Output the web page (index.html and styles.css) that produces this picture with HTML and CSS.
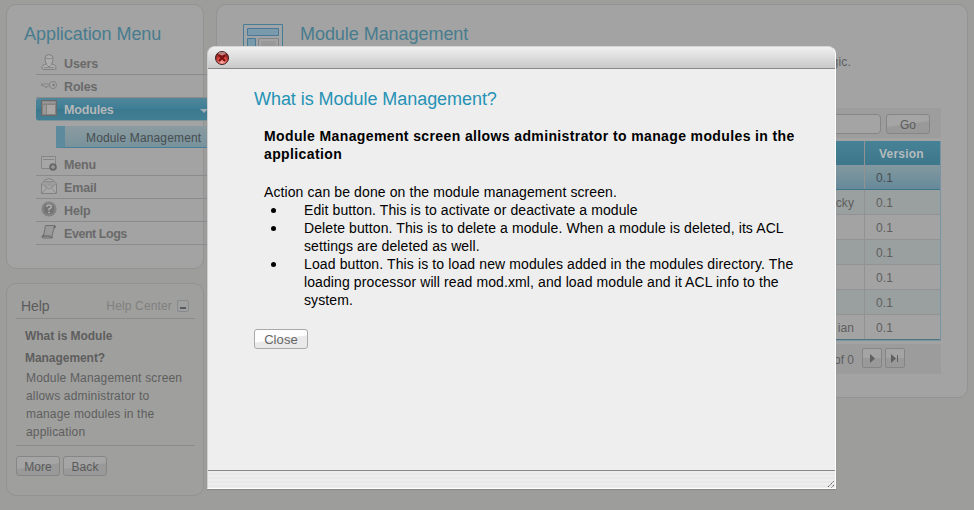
FILE: index.html
```
<!DOCTYPE html>
<html lang="en">
<head>
<meta charset="utf-8">
<title>Module Management</title>
<link rel="stylesheet" href="styles.css">
</head>
<body>
<div class="page">
  <aside class="sidebar">
    <section class="panel menu">
      <h2 class="title">Application Menu</h2>
      <ul class="nav">
        <li class="row"><svg viewBox="0 0 16 16"><path d="M2.500 15.400q-1.500 0-1.500-1.500 0-3.200 4.500-3.900Q3.800 8 4 4 4.200.6 8 .6T12 4q.2 4-1.500 6 4.500.7 4.500 3.900 0 1.500-1.500 1.500z" fill="#adadad" stroke="#7d7d7d"/><path d="M4.500 4q3.500 1.800 7 0M5.500 10.500 8 13l2.500-2.500M3 13.500h10" fill="none" stroke="#888"/></svg><span>Users</span></li>
        <li class="row"><svg viewBox="0 0 16 16"><path d="M.5 7h9v2H6l-1 2-1-2-3.500-.5z" fill="#aaa" stroke="#7b7b7b" stroke-width=".8"/><circle cx="12" cy="8" r="3.500" fill="#a8a8a8" stroke="#808080"/><circle cx="12.500" cy="8" r="1.200" fill="#777"/></svg><span>Roles</span></li>
        <li class="row active"><svg viewBox="0 0 16 16"><path d="M.5.5h15v15H.5z" fill="#858381" stroke="#696969"/><path d="M1.500 1.500h13v2h-13z" fill="#969696"/><path d="M2 5h3v9H2z" fill="#999"/><path d="M6 5h8v9H6z" fill="#a9a6a4"/></svg><span>Modules</span><i class="arrow"></i></li>
        <li class="sub"><span>Module Management</span></li>
        <li class="row"><svg viewBox="0 0 16 16"><path d="M.5 1.500h14v12H.5z" fill="#a6a6a6" stroke="#858585"/><path d="M2 4.500h11" stroke="#858585"/><circle cx="12" cy="12" r="3.800" fill="#696969"/><path d="M10 12h4M12 10v4" stroke="#aaa"/></svg><span>Menu</span></li>
        <li class="row"><svg viewBox="0 0 16 16"><path d="M.5 6 4 2q4-3 8 0l3.500 4v9.500H.5z" fill="#a8a8a8" stroke="#828282"/><path d="M4 3.500h8V8L8 11 4 8zM1 6l5 4-5 5M15 6l-5 4 5 5M5.500 5h5M5.500 7h5" fill="none" stroke="#8b8b8b"/></svg><span>Email</span></li>
        <li class="row"><svg viewBox="0 0 16 16"><circle cx="8" cy="8" r="7" fill="#737373" stroke="#808080"/><circle cx="8" cy="8" r="5.900" fill="none" stroke="#959595" stroke-width=".7"/><path d="M5.800 6q0-2 2.300-2t2.200 1.900Q10.200 7.200 8 8v1.500" fill="none" stroke="#b0b0b0" stroke-width="1.500"/><path d="M7.200 10.700H9v1.600H7.200z" fill="#b0b0b0"/></svg><span>Help</span></li>
        <li class="row"><svg viewBox="0 0 16 16"><path d="M4.500 1.500h9q1.500 0 1 2l-1.500.5-2 8 .5 2H2q-1.500 0-1-2h1.500z" fill="#999" stroke="#707070"/><path d="M1 12h8l1.500 2M13 4l.5-2.500" fill="none" stroke="#5f5f5f"/></svg><span class="tight">Event Logs</span></li>
      </ul>
    </section>
    <section class="panel help">
      <header class="help-head"><span class="help-name">Help</span><span class="center-link">Help Center</span><i class="collapse"></i></header>
      <h3>What is Module<br>Management?</h3>
      <p>Module Management screen<br>allows administrator to<br>manage modules in the<br>application</p>
      <footer><span class="btn dim">More</span><span class="btn dim">Back</span></footer>
    </section>
  </aside>
  <main class="panel content">
    <header class="content-head">
      <svg class="big" viewBox="0 0 40 40"><path d="M.5.5h39v39H.5z" fill="#9ea4a8" stroke="#477c93"/><path d="M4.500 4.500h31v7h-31zM4.500 14.500h8v21h-8z" fill="#789aab" stroke="#4b7995"/><path d="M15.500 14.500h20v21h-20z" fill="#a3a3a3" stroke="#858585"/><path d="M18 17h15v16H18z" fill="#999"/></svg>
      <h2 class="title">Module Management</h2>
    </header>
    <p class="desc">gic.</p>
    <div class="search"><span class="field"></span><span class="btn dim go">Go</span></div>
    <div class="grid">
      <div class="tr th"><span></span><span>Version</span></div>
      <div class="tr sel"><span></span><span>0.1</span></div>
      <div class="tr alt"><span>cky</span><span>0.1</span></div>
      <div class="tr"><span></span><span>0.1</span></div>
      <div class="tr alt"><span></span><span>0.1</span></div>
      <div class="tr"><span></span><span>0.1</span></div>
      <div class="tr alt"><span></span><span>0.1</span></div>
      <div class="tr"><span>ian</span><span>0.1</span></div>
    </div>
    <div class="pager"><span class="of">of 0</span><span class="pg"><svg viewBox="0 0 18 18"><path d="M7 5l5 4.500L7 14z"/></svg></span><span class="pg"><svg viewBox="0 0 18 18"><path d="M5 5l5 4.500L5 14zM11 6h1v7h-1z"/></svg></span></div>
  </main>
</div>
<div class="modal">
  <div class="bar"><svg viewBox="0 0 16 16"><defs><radialGradient id="r" cx=".5" cy=".85" r=".8"><stop offset="0" stop-color="#ffb0a8"/><stop offset=".5" stop-color="#d94440"/><stop offset="1" stop-color="#6b1010"/></radialGradient></defs><circle cx="8" cy="8" r="6.500" fill="url(#r)" stroke="#3c2020"/><ellipse cx="8" cy="3.500" rx="3.800" ry="1.700" fill="#d9b5b5" opacity=".65"/><path d="M5 5l6 6M11 5l-6 6" stroke="#76100f" stroke-width="2"/></svg></div>
  <div class="body">
    <h2>What is Module Management?</h2>
    <div class="copy">
      <p class="lead">Module Management screen allows administrator to manage modules in the<br>application</p>
      <p>Action can be done on the module management screen.</p>
      <ul>
        <li>Edit button. This is to activate or deactivate a module</li>
        <li>Delete button. This is to delete a module. When a module is deleted, its ACL<br>settings are deleted as well.</li>
        <li><span class="wide">Load button. This is to load new modules added in the modules directory. The</span><br>loading processor will read mod.xml, and load module and it ACL info to the<br>system.</li>
      </ul>
    </div>
    <span class="btn">Close</span>
  </div>
  <div class="status"><svg viewBox="0 0 8 8"><path d="M1 7l6-6M4.500 7.500l3-3" stroke="#555" stroke-dasharray="1.500 .7"/></svg></div>
</div>
</body>
</html>
```
FILE: styles.css
```
* { box-sizing: border-box; margin: 0; padding: 0; }
body { width: 974px; height: 510px; overflow: hidden; background: #9d9e9b; font: 12px/18px "Liberation Sans", Arial, sans-serif; color: #5e5e5e; white-space: nowrap; }
ul { list-style: none; }
.page { display: flex; gap: 12px; padding: 4px 6px; align-items: flex-start; }
.sidebar { width: 198px; display: flex; flex-direction: column; gap: 14px; }
.panel { background: #a3a3a3; border: 1px solid #929392; border-radius: 10px; }
.title { font-size: 18px; line-height: 22px; font-weight: 400; letter-spacing: -.05px; color: #477c8e; }
.menu { height: 265px; padding: 18px 0 0 17px; }
.nav { width: 190px; margin: 7px 0 0 12px; }
.row { display: flex; align-items: center; height: 23px; padding-left: 5px; gap: 7px; border-bottom: 1px solid #8b8b8b; font-size: 12.5px; font-weight: 700; letter-spacing: -.15px; color: #6a6a6a; }
.row span { padding-top: 2px; }
.row .tight { letter-spacing: -.45px; }
.row svg { width: 16px; height: 16px; margin-top: -3px; }
.active { background: linear-gradient(#50869a, #3d7e96 50%, #3b788e 51%, #427f94); color: #b5b7b8; border-radius: 3px 0 0 3px; border-color: #7e9299; }
.arrow { margin: 3px 18px 0 auto; border: 4px solid transparent; border-top-color: #9fafb5; border-bottom: 0; width: 0; }
.sub { margin: 5px 0 5px 20px; height: 22px; background: linear-gradient(#8b9ba0, #78929c); border-left: 9px solid #5d8a9d; border-bottom: 1px solid #4a8097; padding-left: 21px; line-height: 24px; font-size: 12px; letter-spacing: .15px; color: #484d50; }
.help { height: 213px; padding: 13px 8px 0 9px; background: #9f9f9d; }
.help-head { display: flex; align-items: center; height: 22px; border-bottom: 1px solid #8b8b8b; padding: 0 6px 4px 5px; color: #808080; font-size: 12px; letter-spacing: .15px; }
.help-name { font-size: 14px; letter-spacing: -.1px; color: #5b5b5b; margin-right: auto; }
.collapse { width: 12px; height: 12px; margin-left: 5px; border: 1px solid #858b90; border-radius: 2px; background: linear-gradient(#555b60,#555b60) center 6px / 6px 2px no-repeat; }
.help h3 { font-size: 12px; line-height: 22px; padding: 6px 0 0 9px; letter-spacing: -.05px; }
.help p { padding-left: 10px; letter-spacing: .17px; border-bottom: 1px solid #8b8b8b; height: 77px; }
.help footer { display: flex; gap: 3px; margin-top: 10px; }
.btn { display: inline-flex; justify-content: center; align-items: center; width: 54px; height: 20px; padding-top: 2px; border: 1px solid #aaa; border-radius: 3px; background: linear-gradient(172deg, #fdfdfd 48%, #e9e9e9 52%); font-size: 13px; color: #666; letter-spacing: .1px; }
.btn.dim { width: 44px; border-color: #868686; background: linear-gradient(172deg, #a5a5a5 48%, #999 52%); font-size: 12px; letter-spacing: .1px; color: #5b5b5b; }
.content { width: 752px; height: 394px; padding: 18px 26px 0; }
.content-head { display: flex; gap: 17px; height: 30px; }
.big { width: 40px; height: 40px; margin-top: 1px; }
.desc { margin: 0 90px 0 auto; width: max-content; letter-spacing: .2px; }
.search { height: 30px; margin-top: 37px; background: #9d9d9d; display: flex; justify-content: flex-end; align-items: center; gap: 5px; padding: 2px 11px 0 0; }
.field { width: 180px; height: 20px; border: 1px solid #868686; border-radius: 4px; background: #a4a4a4; }
.grid { margin: 3px 0 3px; border-right: 1px solid #7893a2; border-bottom: 1px solid #8197a0; }
.tr { display: grid; grid-template-columns: 1fr 75px; height: 25px; border-bottom: 1px solid #929292; line-height: 26px; letter-spacing: .1px; }
.tr span { height: 24px; }
.tr span:first-child { text-align: right; padding-right: 10px; border-right: 1px solid #929292; }
.tr span:last-child { padding-left: 11px; }
.th { height: 24px; background: linear-gradient(#468296, #3e778c); font-weight: 700; letter-spacing: .2px; color: #b5babc; border: 0; }
.tr.th span:last-child { padding-left: 14px; }
.sel { background: linear-gradient(#84999f, #65899a); border-color: #3d7589; color: #484d50; }
.alt { background: #9aa09f; }
.tr:last-child { border-color: #4b7587; }
.pager { height: 30px; background: #9c9c9c; display: flex; justify-content: flex-end; align-items: center; gap: 3px; padding: 0 36px 2px 0; }
.of { margin-right: 5px; padding-top: 3px; }
.pg { width: 20px; height: 20px; border: 1px solid #858585; border-radius: 2px; background: linear-gradient(#a4a4a4 50%, #999 50%); display: flex; }
.pg svg { width: 18px; height: 18px; fill: #606060; }
.modal { position: absolute; left: 207px; top: 46px; width: 629px; height: 443px; border-radius: 8px 8px 0 0; background: #eee; border: 1px solid #fff; border-top-color: #d5d5d5; border-left-color: #cfcfcf; box-shadow: 0 1px 1px #7779; display: flex; flex-direction: column; overflow: hidden; color: #000; }
.bar { height: 22px; border-bottom: 1px solid #898989; background: linear-gradient(#f0f0f0, #c9c9c9); padding: 3px 6px; }
.bar svg { width: 16px; height: 16px; display: block; }
.body { flex: 1; padding: 19px 46px 0; }
.body h2 { font-size: 18px; line-height: 22px; font-weight: 400; letter-spacing: -.05px; color: #2592b5; }
.copy { padding: 17px 0 20px 10px; font-size: 14px; line-height: 18px; letter-spacing: .1px; }
.wide { letter-spacing: .12px; }
.lead { font-size: 14px; font-weight: 700; letter-spacing: .38px; margin-bottom: 20px; }
.copy li { position: relative; padding-left: 40px; }
.copy li::before { content: ""; position: absolute; left: 7px; top: 7px; width: 5px; height: 5px; border-radius: 50%; background: #000; }
.status { height: 18px; border-top: 1px solid #898989; background: repeating-linear-gradient(#eee 0 2px, #e8e8e8 2px 4px); display: flex; justify-content: flex-end; align-items: flex-end; }
.status svg { width: 8px; height: 8px; }
```
